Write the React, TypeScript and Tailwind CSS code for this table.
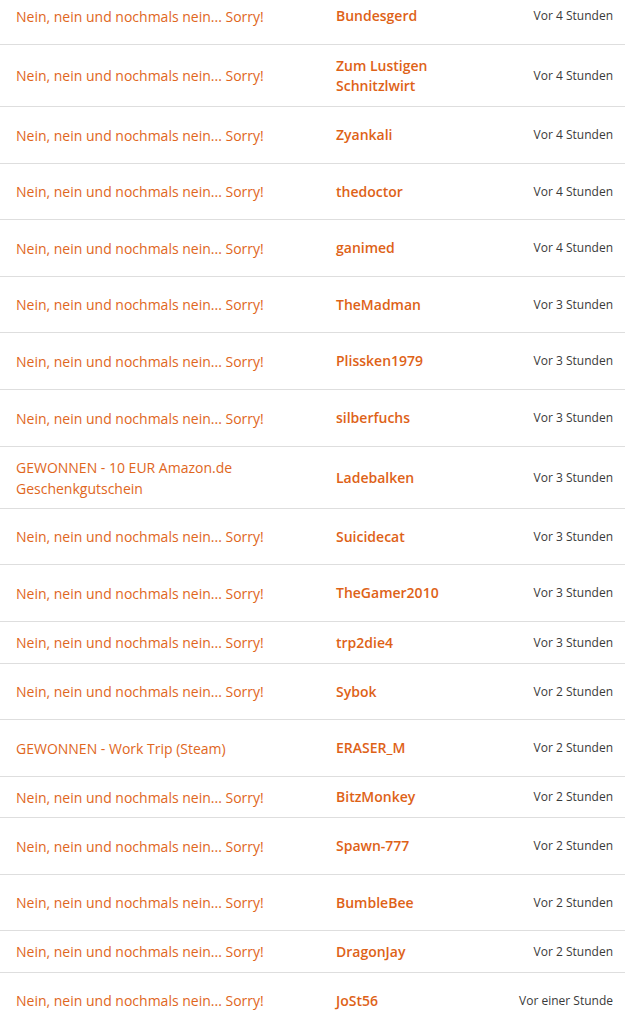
const NOPE = "Nein, nein und nochmals nein... Sorry!";

type Row = { title: string; user: string; time: string; h: string };

const rows: Row[] = [
  { title: NOPE, user: "Bundesgerd", time: "Vor 4 Stunden", h: "h-[57px]" },
  { title: NOPE, user: "Zum Lustigen Schnitzlwirt", time: "Vor 4 Stunden", h: "h-[62px]" },
  { title: NOPE, user: "Zyankali", time: "Vor 4 Stunden", h: "h-[57px]" },
  { title: NOPE, user: "thedoctor", time: "Vor 4 Stunden", h: "h-[56px]" },
  { title: NOPE, user: "ganimed", time: "Vor 4 Stunden", h: "h-[57px]" },
  { title: NOPE, user: "TheMadman", time: "Vor 3 Stunden", h: "h-[56px]" },
  { title: NOPE, user: "Plissken1979", time: "Vor 3 Stunden", h: "h-[57px]" },
  { title: NOPE, user: "silberfuchs", time: "Vor 3 Stunden", h: "h-[57px]" },
  { title: "GEWONNEN - 10 EUR Amazon.de Geschenkgutschein", user: "Ladebalken", time: "Vor 3 Stunden", h: "h-[62px]" },
  { title: NOPE, user: "Suicidecat", time: "Vor 3 Stunden", h: "h-[56px]" },
  { title: NOPE, user: "TheGamer2010", time: "Vor 3 Stunden", h: "h-[57px]" },
  { title: NOPE, user: "trp2die4", time: "Vor 3 Stunden", h: "h-[42px]" },
  { title: NOPE, user: "Sybok", time: "Vor 2 Stunden", h: "h-[56px]" },
  { title: "GEWONNEN - Work Trip (Steam)", user: "ERASER_M", time: "Vor 2 Stunden", h: "h-[57px]" },
  { title: NOPE, user: "BitzMonkey", time: "Vor 2 Stunden", h: "h-[41px]" },
  { title: NOPE, user: "Spawn-777", time: "Vor 2 Stunden", h: "h-[57px]" },
  { title: NOPE, user: "BumbleBee", time: "Vor 2 Stunden", h: "h-[56px]" },
  { title: NOPE, user: "DragonJay", time: "Vor 2 Stunden", h: "h-[42px]" },
  { title: NOPE, user: "JoSt56", time: "Vor einer Stunde", h: "h-[56px]" },
];

export default function App() {
  return (
    <div className="h-[1024px] overflow-hidden bg-white font-['Open_Sans',sans-serif]">
      <div className="-mt-[12px]">
        {rows.map((r, i) => (
          <div
            key={i}
            className={`grid grid-cols-[320px_180px_1fr] items-center border-b border-[#dedede] ${r.h}`}
          >
            <a href="#" className="px-4 text-sm leading-[21px] text-[#e0661d]">
              {r.title}
            </a>
            <a href="#" className="pl-4 pr-2 text-sm font-semibold leading-5 text-[#de6217]">
              {r.user}
            </a>
            <span className="pr-3 text-right text-xs text-[#3a3a3a]">{r.time}</span>
          </div>
        ))}
      </div>
    </div>
  );
}
